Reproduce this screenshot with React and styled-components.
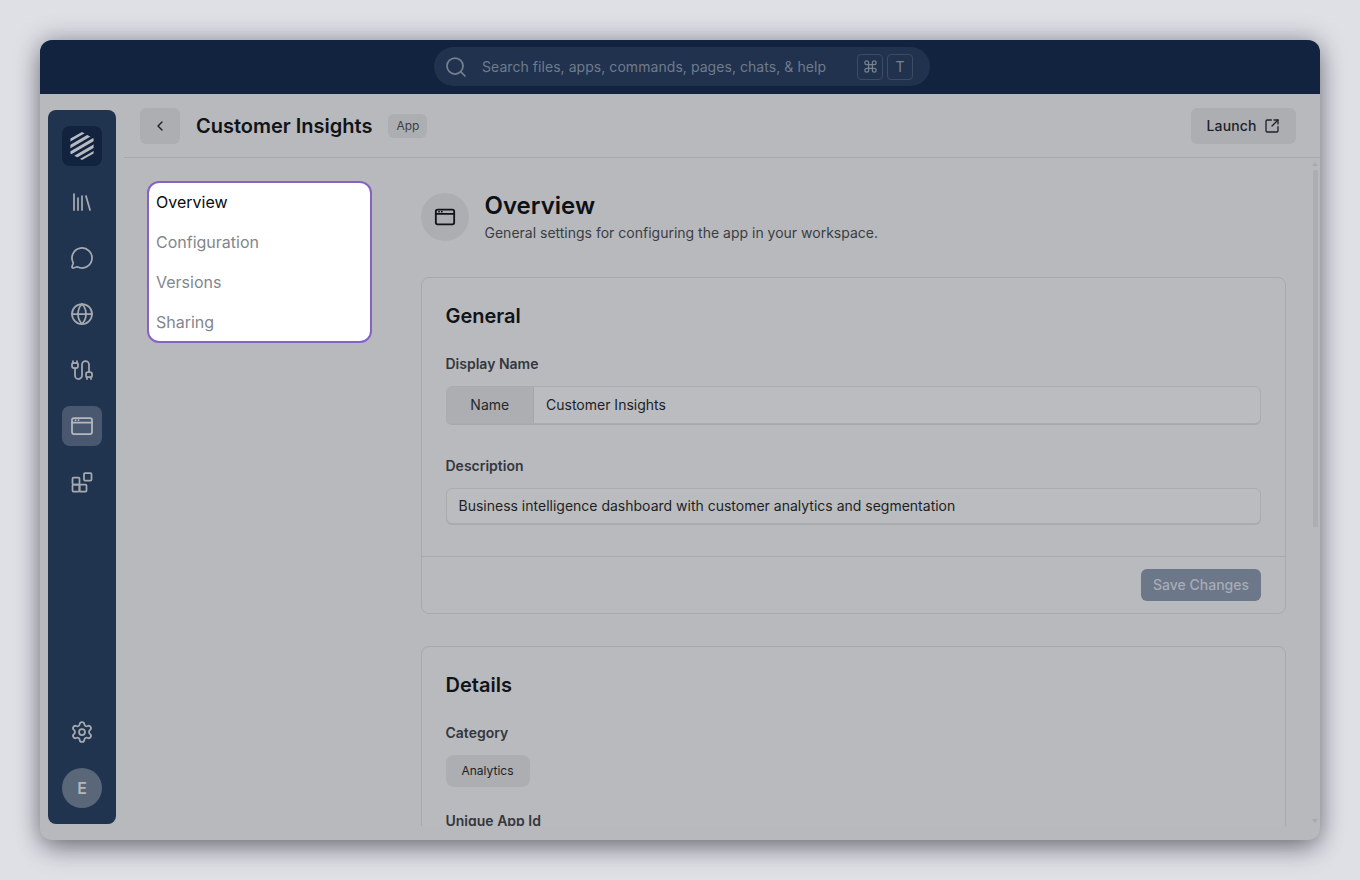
import React from "react";
import styled, { createGlobalStyle } from "styled-components";
import { Library, MessageCircle, Globe, Cable, Settings, Search, Command, ChevronLeft, SquareArrowOutUpRight } from "lucide-react";

const Global = createGlobalStyle`
  html, body { margin: 0; padding: 0; height: 100%; background: #dfe0e6; }
  body { font-family: Inter, "Liberation Sans", sans-serif; color: #0d1014; }
  * { box-sizing: border-box; }
`;
const Page = styled.div`
  width: 1360px; height: 880px; padding: 40px;
`;
const Window = styled.div`
  width: 1280px; height: 800px; border-radius: 12px; overflow: hidden;
  background: #b8b9bd; display: flex; flex-direction: column;
  box-shadow: 0 0 24px rgba(10, 12, 24, 0.34), 0 12px 26px -4px rgba(10, 12, 24, 0.36);
`;
const TopBar = styled.header`
  height: 54px; flex: none; background: #11233f; display: flex; justify-content: center; padding: 7px 0 0 4px;
`;
const SearchBox = styled.div`
  width: 496px; height: 39px; border-radius: 20px; background: #20324e; display: flex; align-items: center;
  padding: 0 17px 0 10px; color: #747f8f; font-size: 14px;
`;
const Placeholder = styled.span`
  flex: 1; margin-left: 14px; color: #707b8c; letter-spacing: 0.004em;
`;
const Kbd = styled.span`
  width: 26px; height: 26px; border: 1px solid #3d4c63; border-radius: 4px; margin-left: 4px;
  display: flex; align-items: center; justify-content: center; font-size: 14px; color: #78828f;
`;
const Body = styled.div`
  flex: 1; min-height: 0; display: flex; padding-left: 8px;
`;
const Rail = styled.nav`
  width: 68px; flex: none; margin: 16px 0 16px; border-radius: 8px; background: #20344f;
  display: flex; flex-direction: column; align-items: center; padding: 16px 0; gap: 16px;
`;
const RailItem = styled.div`
  width: 40px; height: 40px; border-radius: 8px; display: flex; align-items: center; justify-content: center;
  background: ${p => p.$active ? "#49586e" : p.$logo ? "#11233f" : "transparent"};
  color: ${p => p.$active ? "#b5b8be" : "#a6a9b0"};
`;
const Spacer = styled.div`flex: 1;`;
const Avatar = styled.div`
  width: 40px; height: 40px; border-radius: 50%; background: #596779; color: #b4b8be;
  display: flex; align-items: center; justify-content: center; font-size: 16px; font-weight: 600;
`;
const Main = styled.main`
  flex: 1; min-width: 0; margin-left: 8px; display: flex; flex-direction: column; padding-bottom: 14px;
`;
const PageHeader = styled.div`
  height: 64px; flex: none; border-bottom: 1px solid #a7a8ac; display: flex; align-items: center; padding: 0 24px 0 16px;
`;
const BackButton = styled.button`
  width: 40px; height: 36px; border: 0; border-radius: 6px; background: #adaeb2; color: #1a1d22; padding: 0;
  display: flex; align-items: center; justify-content: center;
`;
const PageTitle = styled.h1`
  margin: 0 16px; font-size: 20px; line-height: 28px; font-weight: 600; color: #101318;
`;
const Badge = styled.span`
  height: 24px; padding: 0 8px; border-radius: 6px; background: #adaeb2; color: #3c3f45; font-size: 12px;
  display: flex; align-items: center;
`;
const LaunchButton = styled.button`
  margin-left: auto; width: 105px; height: 36px; border: 0; border-radius: 6px; background: #adaeb2; color: #1f2227;
  font: 500 14px Inter, sans-serif; letter-spacing: 0.1px; display: flex; align-items: center; justify-content: center; gap: 8px; padding: 0;
`;
const ScrollArea = styled.div`
  flex: 1; min-height: 0; position: relative;
`;
const Scroller = styled.div`
  height: 100%; overflow: hidden; display: flex; align-items: flex-start; gap: 48.5px;
  padding: 23px 0 0 23px;
`;
const ScrollThumb = styled.div`
  position: absolute; top: 12px; right: 2px; width: 5px; height: 357px; background: #adaeb2;
`;
const ScrollArrow = styled.div`
  position: absolute; right: 2px; width: 0; height: 0;
  border-left: 3px solid transparent; border-right: 3px solid transparent;
  ${p => p.$down
    ? "bottom: 3px; border-top: 4px solid #a9aaae;"
    : "top: 4px; border-bottom: 4px solid #a9aaae;"}
`;
const SideNav = styled.div`
  width: 225px; height: 162px; flex: none; background: #fff; border-radius: 12px; border: 2px solid #8463c4;
  padding: 0 0 0 7px; display: flex; flex-direction: column;
`;
const SideItem = styled.div`
  height: 40px; flex: none; display: flex; align-items: center; font-size: 16px;
  color: ${p => p.$active ? "#0a0c10" : "#83868c"};
  &:first-child { margin-top: -1px; }
`;
const Content = styled.div`
  width: 865.5px; flex: none; padding-top: 10px; display: flex; flex-direction: column; gap: 32px;
`;
const Intro = styled.div`
  display: flex; align-items: center; gap: 16px; margin-bottom: 2px;
`;
const IntroIcon = styled.div`
  width: 48px; height: 48px; border-radius: 50%; background: #adaeb2; color: #101318;
  display: flex; align-items: center; justify-content: center;
`;
const IntroTitle = styled.h2`
  margin: 0; padding-top: 1px; font-size: 24px; line-height: 28px; font-weight: 600; color: #0d1014;
`;
const IntroText = styled.p`
  margin: 0; font-size: 14px; line-height: 20px; color: #3a3d43; padding-top: 3px;
`;
const Card = styled.section`
  border: 1px solid #a8a9ad; border-radius: 8px; background: #b9babe;
`;
const CardBody = styled.div`
  padding: 24px 24px 32px; display: flex; flex-direction: column;
`;
const CardTitle = styled.h3`
  margin: 0 0 24px; font-size: 20px; line-height: 28px; font-weight: 600; color: #101318;
`;
const Label = styled.div`
  font-size: 14px; line-height: 20px; font-weight: 600; color: #34373d; margin-bottom: 12px;
`;
const InputGroup = styled.div`
  display: flex; height: 38px; margin-bottom: 32px; border: 1px solid #abacb0; border-radius: 6px; overflow: hidden; background: #bbbcc0;
  box-shadow: 0 1px 0 rgba(90, 92, 100, 0.18);
`;
const Addon = styled.div`
  width: 87.5px; flex: none; background: #adaeb2; border-right: 1px solid #a5a6aa; font-size: 14px; color: #25282d;
  display: flex; align-items: center; justify-content: center; padding-bottom: 2px;
`;
const Field = styled.div`
  flex: 1; padding: 0 12px 2px; display: flex; align-items: center; font-size: 14px; color: #1c1f24;
`;
const Input = styled.div`
  height: 36px; border: 1px solid #abacb0; border-radius: 6px; background: #bbbcc0; padding: 0 12px 2px;
  display: flex; align-items: center; font-size: 14px; color: #1c1f24;
  box-shadow: 0 1px 0 rgba(90, 92, 100, 0.18);
`;
const CardFooter = styled.div`
  border-top: 1px solid #a8a9ad; padding: 12px 24px; display: flex; justify-content: flex-end;
`;
const SaveButton = styled.button`
  width: 120px; height: 32px; border: 0; border-radius: 6px; background: #6c7789; color: #a7acb6; padding: 0 0 2px;
  font: 500 14px Inter, sans-serif;
`;
const Chip = styled.div`
  width: 84px; height: 32px; border-radius: 8px; background: #adaeb2; color: #1c1f24; font-size: 12px;
  display: flex; align-items: center; justify-content: center; margin-bottom: 24px; padding-bottom: 1px;
`;

const LogoMark = () => (
  <svg width="24" height="28" viewBox="0 0 24 28" fill="none">
    <defs>
      <clipPath id="hex"><path d="M12 0 23.6 6.6V21.4L12 28 .4 21.4V6.6Z" /></clipPath>
    </defs>
    <g clipPath="url(#hex)" stroke="#b7bac0" strokeWidth="3">
      <path d="M-3 9.8 17 -1.8M-3 16.4 27 -1M-3 23 27 5.6M-3 29.6 27 12.2M-3 36.2 27 18.8M3 39.4 27 25.4" />
    </g>
  </svg>
);
const WindowIcon = ({ size = 24, sw = 1.75 }) => (
  <svg width={size} height={size} viewBox="0 0 24 24" fill="none" stroke="currentColor" strokeWidth={sw} strokeLinecap="round" strokeLinejoin="round">
    <rect x="2" y="4" width="20" height="16" rx="2" />
    <path d="M2 8.5h20M5.5 6.2h.01M8.5 6.2h.01" />
  </svg>
);
const BlocksIcon = () => (
  <svg width="24" height="24" viewBox="0 0 24 24" fill="none" stroke="currentColor" strokeWidth="1.75" strokeLinejoin="round">
    <rect x="2.5" y="7.5" width="7" height="7" rx="1" />
    <rect x="2.5" y="14.5" width="7" height="7" rx="1" />
    <rect x="9.5" y="14.5" width="7" height="7" rx="1" />
    <rect x="14" y="3" width="7.5" height="7.5" rx="1" />
  </svg>
);

export default function App() {
  return (
    <Page>
      <Global />
      <Window>
        <TopBar>
          <SearchBox>
            <Search size={24} strokeWidth={1.75} />
            <Placeholder>Search files, apps, commands, pages, chats, &amp; help</Placeholder>
            <Kbd><Command size={15} strokeWidth={2} /></Kbd>
            <Kbd>T</Kbd>
          </SearchBox>
        </TopBar>
        <Body>
          <Rail>
            <RailItem $logo><LogoMark /></RailItem>
            <RailItem><Library size={24} strokeWidth={1.75} /></RailItem>
            <RailItem><MessageCircle size={24} strokeWidth={1.75} /></RailItem>
            <RailItem><Globe size={24} strokeWidth={1.75} /></RailItem>
            <RailItem><Cable size={24} strokeWidth={1.75} /></RailItem>
            <RailItem $active><WindowIcon /></RailItem>
            <RailItem><BlocksIcon /></RailItem>
            <Spacer />
            <RailItem><Settings size={24} strokeWidth={1.75} /></RailItem>
            <Avatar>E</Avatar>
          </Rail>
          <Main>
            <PageHeader>
              <BackButton><ChevronLeft size={16} strokeWidth={2} /></BackButton>
              <PageTitle>Customer Insights</PageTitle>
              <Badge>App</Badge>
              <LaunchButton>Launch <SquareArrowOutUpRight size={16} strokeWidth={2} /></LaunchButton>
            </PageHeader>
            <ScrollArea>
              <Scroller>
                <SideNav>
                  <SideItem $active>Overview</SideItem>
                  <SideItem>Configuration</SideItem>
                  <SideItem>Versions</SideItem>
                  <SideItem>Sharing</SideItem>
                </SideNav>
                <Content>
                  <Intro>
                    <IntroIcon><WindowIcon size={22} sw={2} /></IntroIcon>
                    <div>
                      <IntroTitle>Overview</IntroTitle>
                      <IntroText>General settings for configuring the app in your workspace.</IntroText>
                    </div>
                  </Intro>
                  <Card>
                    <CardBody>
                      <CardTitle>General</CardTitle>
                      <Label>Display Name</Label>
                      <InputGroup>
                        <Addon>Name</Addon>
                        <Field>Customer Insights</Field>
                      </InputGroup>
                      <Label>Description</Label>
                      <Input>Business intelligence dashboard with customer analytics and segmentation</Input>
                    </CardBody>
                    <CardFooter><SaveButton>Save Changes</SaveButton></CardFooter>
                  </Card>
                  <Card>
                    <CardBody>
                      <CardTitle>Details</CardTitle>
                      <Label>Category</Label>
                      <Chip>Analytics</Chip>
                      <Label>Unique App Id</Label>
                    </CardBody>
                  </Card>
                </Content>
              </Scroller>
              <ScrollArrow />
              <ScrollThumb />
              <ScrollArrow $down />
            </ScrollArea>
          </Main>
        </Body>
      </Window>
    </Page>
  );
}
